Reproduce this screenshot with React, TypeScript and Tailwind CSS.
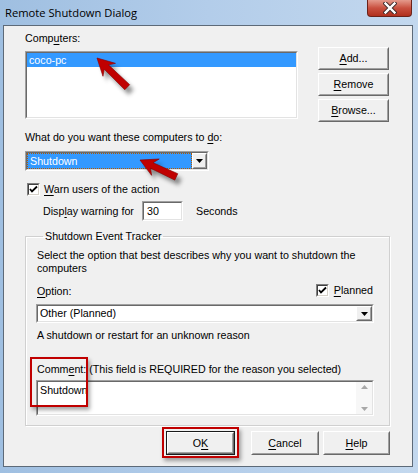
import React from "react";

const Sunken = ({ className = "", inner = "", children }: { className?: string; inner?: string; children?: React.ReactNode }) => (
  <div className={`border border-t-[#a0a0a0] border-l-[#a0a0a0] border-b-white border-r-white ${className}`}>
    <div className={`w-full h-full border border-t-[#696969] border-l-[#696969] border-b-[#e3e3e3] border-r-[#e3e3e3] ${inner}`}>{children}</div>
  </div>
);

const Raised = ({ className = "", children }: { className?: string; children?: React.ReactNode }) => (
  <div className={`border border-t-white border-l-white border-b-[#696969] border-r-[#696969] bg-[#f0f0f0] ${className}`}>
    <div className="w-full h-full border border-t-[#f0f0f0] border-l-[#f0f0f0] border-b-[#a0a0a0] border-r-[#a0a0a0] flex items-center justify-center">
      {children}
    </div>
  </div>
);

const Btn = ({ children }: { children: React.ReactNode }) => <Raised className="w-[71px] h-[23px]">{children}</Raised>;

const U = ({ children }: { children: React.ReactNode }) => <span className="underline decoration-1 underline-offset-[2px]">{children}</span>;

const Check = () => (
  <div className="w-[13px] h-[13px] border border-t-[#808080] border-l-[#808080] border-b-white border-r-white">
    <div className="w-full h-full bg-white border border-t-[#404040] border-l-[#404040] border-b-[#d4d0c8] border-r-[#d4d0c8] flex items-center justify-center">
      <svg width="9" height="9" viewBox="0 0 9 9">
        <path d="M1 4 L3 6.5 L8 1.5" stroke="#000" strokeWidth="1.8" fill="none" />
      </svg>
    </div>
  </div>
);

const DownTri = () => (
  <svg width="7" height="4" viewBox="0 0 7 4">
    <path d="M0 0 H7 L3.5 4 Z" fill="#000" />
  </svg>
);

const Arrow = ({ x, y, angle, len }: { x: number; y: number; angle: number; len: number }) => {
  const pts = `0,0 -17,-9 -13,-3 -${len},-3.5 -${len},3.5 -13,3 -17,9`;
  return (
    <>
      <g transform={`translate(${x + 4} ${y + 5}) rotate(${angle})`} filter="url(#blur)">
        <polygon points={pts} fill="#000" opacity="0.45" />
      </g>
      <g transform={`translate(${x} ${y}) rotate(${angle})`}>
        <polygon points={pts} fill="#c00000" stroke="#8a0000" strokeWidth="0.6" />
      </g>
    </>
  );
};

export default function App() {
  return (
    <div className="relative w-[418px] h-[473px] overflow-hidden bg-gradient-to-r from-[#9fbfe1] via-[#b3cdea] to-[#c3d8ee] font-['Liberation_Sans',Arial,sans-serif] text-[10.7px] leading-[13px] text-black">
      {/* Title bar */}
      <div className="h-[25px] flex items-start justify-between">
        <div className="pl-[5px] pt-[5px] font-['Open_Sans',sans-serif] text-[11.2px] leading-[16px] text-black">Remote Shutdown Dialog</div>
        <div className="mr-[6px] w-[45px] h-[17px] rounded-b-[4px] border border-[#6b2219] border-t-0 bg-gradient-to-b from-[#e49a8c] via-[#c9503f] to-[#b0301e] flex items-center justify-center">
          <svg width="14" height="12" viewBox="0 0 14 12">
            <path d="M2.5 1.5 L11.5 10.5 M11.5 1.5 L2.5 10.5" stroke="#3d2a2a" strokeWidth="4.2" strokeLinecap="square" />
            <path d="M2.5 1.5 L11.5 10.5 M11.5 1.5 L2.5 10.5" stroke="#ffffff" strokeWidth="2.4" strokeLinecap="square" />
          </svg>
        </div>
      </div>

      {/* Client area */}
      <div className="ml-[3px] w-[410px] h-[442px] border border-[#5d6a78] bg-[#f0f0f0] pl-[21px]">
        {/* Computers row */}
        <div className="flex items-start h-[96px]">
          <div className="w-[273px]">
            <div className="mt-[6px]">
              Comp<U>u</U>ters:
            </div>
            <Sunken className="mt-[6px] w-[273px] h-[68px]" inner="bg-white">
              <div className="h-[14px] bg-[#3399ff] text-white pl-[2px] leading-[14px]">coco-pc</div>
            </Sunken>
          </div>
          <div className="ml-[20px] mt-[21px] flex flex-col gap-[3px]">
            <Btn>
              <U>A</U>dd...
            </Btn>
            <Btn>
              <U>R</U>emove
            </Btn>
            <Btn>
              <U>B</U>rowse...
            </Btn>
          </div>
        </div>

        <div className="mt-[9px]">
          What do you want these computers to <U>d</U>o:
        </div>

        {/* Shutdown combo */}
        <Sunken className="mt-[7px] w-[184px] h-[20px]" inner="bg-white flex">
          <div className="flex-1 bg-[#3399ff] border border-dotted border-[#b35a00] text-white pl-[2px] leading-[14px]">Shutdown</div>
          <Raised className="w-[15px] h-full">
            <DownTri />
          </Raised>
        </Sunken>

        <div className="mt-[12px] ml-[2px] flex items-center gap-[4px]">
          <Check />
          <span>
            <U>W</U>arn users of the action
          </span>
        </div>

        <div className="mt-[5px] ml-[18px] flex items-center">
          <div className="w-[99px]">
            Disp<U>l</U>ay warning for
          </div>
          <Sunken className="w-[41px] h-[20px]" inner="bg-white pl-[3px] flex items-center">
            30
          </Sunken>
          <div className="ml-[13px]">Seconds</div>
        </div>

        {/* Group box */}
        <fieldset className="mt-[9px] w-[364px] border border-[#d0d0d0] pl-[10px] pr-[15px] pb-[9px] shadow-[inset_1px_1px_0_#ffffff,1px_1px_0_#ffffff]">
          <legend className="ml-[7px] px-[2px]">Shutdown Event Tracker</legend>
          <div className="mt-[6px] ml-[1px]">
            Select the option that best describes why you want to shutdown the
            <br />
            computers
          </div>
          <div className="mt-[8px] flex items-center justify-between ml-[1px]">
            <div className="mt-[2px]">
              <U>O</U>ption:
            </div>
            <div className="flex items-center gap-[5px] mr-[1px]">
              <Check />
              <span>
                <U>P</U>lanned
              </span>
            </div>
          </div>
          <Sunken className="mt-[6px] w-[338px] h-[19px]" inner="bg-white flex items-center">
            <div className="flex-1 pl-[2px]">Other (Planned)</div>
            <Raised className="w-[16px] h-full">
              <DownTri />
            </Raised>
          </Sunken>
          <div className="mt-[6px] ml-[1px]">A shutdown or restart for an unknown reason</div>
          <div className="mt-[21px] ml-[1px]">
            Comm<U>e</U>nt: (This field is REQUIRED for the reason you selected)
          </div>
          <Sunken className="mt-[4px] w-[338px] h-[36px]" inner="bg-white flex">
            <div className="flex-1 pl-[2px] pt-[2px]">Shutdown</div>
            <div className="w-[16px] h-full bg-[#f7f7f7] flex flex-col items-center justify-between py-[3px]">
              <svg width="7" height="4" viewBox="0 0 7 4">
                <path d="M0 4 H7 L3.5 0 Z" fill="#a8a8a8" />
              </svg>
              <svg width="7" height="4" viewBox="0 0 7 4">
                <path d="M0 0 H7 L3.5 4 Z" fill="#a8a8a8" />
              </svg>
            </div>
          </Sunken>
        </fieldset>

        {/* Bottom buttons */}
        <div className="mt-[5px] flex">
          <div className="ml-[141px] w-[69px] h-[24px] border border-[#1a1a1a]">
            <Raised className="w-full h-full">
              <span>
                O<U>K</U>
              </span>
            </Raised>
          </div>
          <div className="ml-[16px]">
            <Raised className="w-[68px] h-[24px]">
              <span>
                <U>C</U>ancel
              </span>
            </Raised>
          </div>
          <div className="ml-[4px]">
            <Raised className="w-[67px] h-[24px]">
              <span>
                <U>H</U>elp
              </span>
            </Raised>
          </div>
        </div>
      </div>

      {/* Annotations */}
      <div className="absolute left-[30px] top-[357px] w-[58px] h-[50px] border-2 border-[#c00000] shadow-[2px_3px_4px_rgba(0,0,0,0.35)]" />
      <div className="absolute left-[162px] top-[427px] w-[77px] h-[31px] border-2 border-[#c00000] shadow-[2px_3px_4px_rgba(0,0,0,0.35)]" />
      <svg className="absolute inset-0 pointer-events-none" width="418" height="473">
        <defs>
          <filter id="blur" x="-50%" y="-50%" width="200%" height="200%">
            <feGaussianBlur stdDeviation="2" />
          </filter>
        </defs>
        <Arrow x={97} y={58} angle={224} len={42} />
        <Arrow x={140} y={160} angle={205} len={40} />
      </svg>
    </div>
  );
}
